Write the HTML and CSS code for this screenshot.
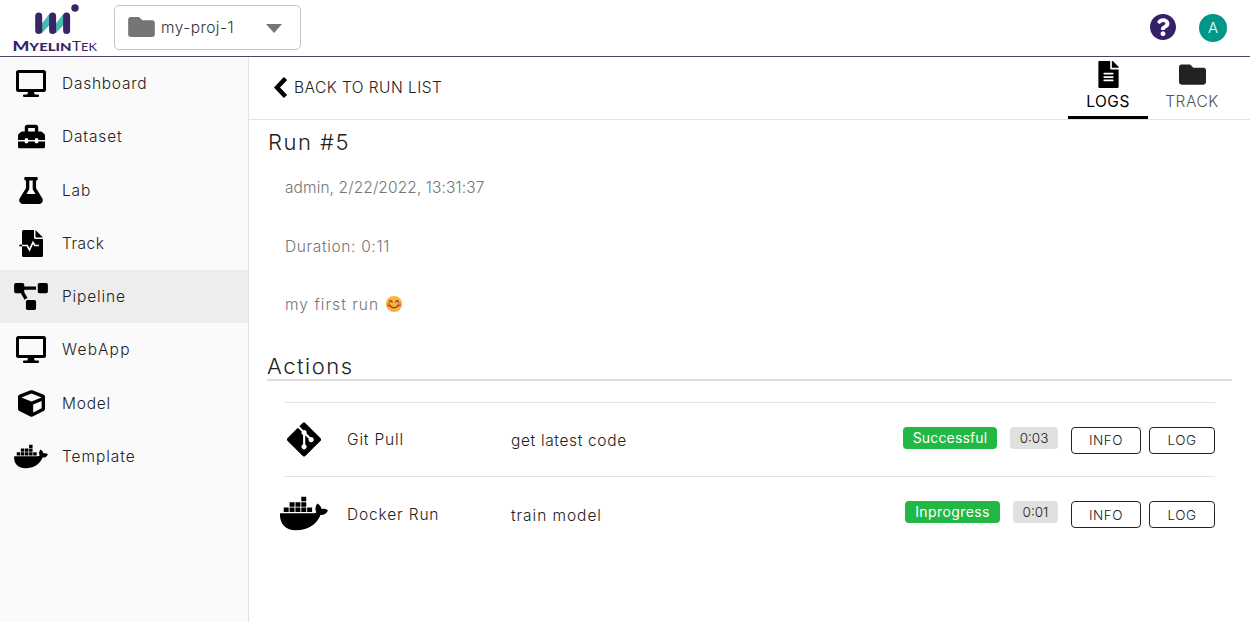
FILE: index.html
```html
<!DOCTYPE html>
<html lang="en">
<head>
<meta charset="utf-8">
<title>MyelinTek – Run #5</title>
<link rel="stylesheet" href="styles.css">
</head>
<body>
<svg class="defs" aria-hidden="true">
  <symbol id="desktop" viewBox="0 0 30 27"><path fill-rule="evenodd" d="M2.5 0h25A2.5 2.5 0 0 1 30 2.500V19.500A2.500 2.500 0 0 1 27.500 22H18l.7 2.500h3.300a1 1 0 0 1 1 1v.5a1 1 0 0 1-1 1H8a1 1 0 0 1-1-1v-.5a1 1 0 0 1 1-1h3.300L12 22H2.500A2.500 2.500 0 0 1 0 19.500V2.500A2.500 2.500 0 0 1 2.500 0zM3 3v16h24V3z"/></symbol>
  <symbol id="toolbox" viewBox="0 0 512 512"><path d="M502.63 214.63l-45.25-45.25c-6-6-14.14-9.38-22.63-9.38H384V80c0-26.51-21.490-48-48-48H176c-26.510 0-48 21.490-48 48v80H77.250c-8.490 0-16.620 3.370-22.630 9.380L9.370 214.630c-6 6-9.370 14.140-9.370 22.630V320h128v-16c0-8.840 7.160-16 16-16h32c8.840 0 16 7.160 16 16v16h128v-16c0-8.840 7.160-16 16-16h32c8.840 0 16 7.160 16 16v16h128v-82.750c0-8.480-3.370-16.620-9.370-22.620zM320 160H192V96h128v64zm64 208c0 8.840-7.160 16-16 16h-32c-8.840 0-16-7.160-16-16v-16H192v16c0 8.840-7.160 16-16 16h-32c-8.840 0-16-7.160-16-16v-16H0v96c0 17.670 14.330 32 32 32h448c17.670 0 32-14.330 32-32v-96H384v16z"/></symbol>
  <symbol id="flask" viewBox="0 0 448 512"><path d="M437.200 403.500L320 215V64h8c13.300 0 24-10.700 24-24V24c0-13.300-10.700-24-24-24H120c-13.300 0-24 10.700-24 24v16c0 13.300 10.700 24 24 24h8v151L10.800 403.500C-18.500 450.600 15.300 512 70.900 512h306.200c55.700 0 89.400-61.500 60.100-108.500zM137.900 320l48.200-77.600c3.700-5.200 5.800-11.600 5.800-18.400V64h64v160c0 6.900 2.200 13.200 5.800 18.400l48.200 77.600h-172z"/></symbol>
  <symbol id="wave-file" viewBox="0 0 24 27"><path d="M4.500 0H15v7.500a1.500 1.500 0 0 0 1.500 1.500H24v16.500a1.500 1.500 0 0 1-1.500 1.500h-18A1.500 1.500 0 0 1 3 25.500V1.500A1.500 1.500 0 0 1 4.500 0zM16.500 0l7.500 7.500h-7.500z"/><path d="M3 15.500h5.200l2.300 4.300L14 12.500l2 3h4" fill="none" stroke="#fafafa" stroke-width="1.700"/><path d="M.3 15.500H3" stroke="#000" stroke-width="1.700"/></symbol>
  <symbol id="diagram" viewBox="0 0 640 512"><path d="M384 320H256c-17.670 0-32 14.330-32 32v128c0 17.670 14.330 32 32 32h128c17.670 0 32-14.330 32-32V352c0-17.670-14.330-32-32-32zM192 32c0-17.670-14.330-32-32-32H32C14.330 0 0 14.330 0 32v128c0 17.670 14.330 32 32 32h95.720l73.160 128.040C211.980 300.980 232.400 288 256 288h.28L192 175.510V128h224V64H192V32zM608 0H480c-17.670 0-32 14.330-32 32v128c0 17.670 14.330 32 32 32h128c17.670 0 32-14.330 32-32V32c0-17.670-14.330-32-32-32z"/></symbol>
  <symbol id="cube" viewBox="0 0 512 512"><path d="M239.100 6.300l-208 78c-18.700 7-31.100 25-31.100 45v225.100c0 18.200 10.300 34.800 26.500 42.900l208 104c13.500 6.800 29.400 6.800 42.900 0l208-104c16.300-8.100 26.500-24.800 26.500-42.900V129.300c0-20-12.400-37.900-31.100-44.900l-208-78C262 2.200 250 2.200 239.100 6.300zM256 68.400l192 72v1.100l-192 78-192-78v-1.100l192-72zm32 356V275.500l160-65v133.900l-160 80z"/></symbol>
  <symbol id="docker" viewBox="0 0 640 512"><path d="M349.900 236.300h-66.100v-59.400h66.100v59.400zm0-204.300h-66.100v60.700h66.100V32zm78.200 144.800H362v59.400h66.100v-59.400zm-156.300-72.100h-66.100v60.100h66.100v-60.100zm78.100 0h-66.100v60.100h66.100v-60.100zm276.800 100c-14.400-9.700-47.600-13.200-73.100-8.400-3.300-24-16.700-44.900-41.100-63.700l-14-9.300-9.300 14c-18.400 27.800-23.400 73.600-3.700 103.800-8.700 4.700-25.800 11.100-48.400 10.700H2.400c-8.700 50.800 5.800 116.800 44 162.100 37.100 43.900 92.700 66.200 165.400 66.200 157.400 0 273.900-72.500 328.400-204.200 21.400.4 67.600.1 91.300-45.200 1.500-2.500 6.600-13.200 8.500-17.100l-13.300-8.900zm-511.100-27.900h-66v59.400h66.100v-59.400zm78.100 0h-66.100v59.400h66.100v-59.400zm78.100 0h-66.100v59.400h66.100v-59.400zm-78.100-72.100h-66.100v60.100h66.100v-60.100z"/></symbol>
  <symbol id="git" viewBox="0 0 448 512"><path d="M439.550 236.050L244 40.450a28.870 28.870 0 0 0-40.810 0l-40.660 40.630 51.520 51.520c27.060-9.140 52.680 16.770 43.390 43.680l49.660 49.660c34.230-11.800 61.180 31 35.470 56.690-26.490 26.490-70.210-2.870-56-37.340L240.220 199v121.850c25.300 12.540 22.260 41.850 9.080 55a34.340 34.340 0 0 1-48.550 0c-17.570-17.600-11.070-46.910 11.250-56v-123c-20.800-8.510-24.600-30.740-18.640-45L142.570 101 8.450 235.140a28.860 28.860 0 0 0 0 40.810l195.610 195.600a28.860 28.860 0 0 0 40.800 0l194.690-194.690a28.860 28.860 0 0 0 0-40.810z"/></symbol>
  <symbol id="file" viewBox="0 0 384 512"><path d="M224 136V0H24C10.700 0 0 10.700 0 24v464c0 13.300 10.700 24 24 24h336c13.300 0 24-10.700 24-24V160H248c-13.200 0-24-10.800-24-24zm64 236c0 6.600-5.400 12-12 12H108c-6.600 0-12-5.400-12-12v-8c0-6.600 5.400-12 12-12h168c6.600 0 12 5.400 12 12v8zm0-64c0 6.600-5.400 12-12 12H108c-6.600 0-12-5.400-12-12v-8c0-6.600 5.400-12 12-12h168c6.600 0 12 5.400 12 12v8zm0-72v8c0 6.600-5.400 12-12 12H108c-6.600 0-12-5.400-12-12v-8c0-6.600 5.400-12 12-12h168c6.600 0 12 5.400 12 12zm96-114.100v6.100H256V0h6.100c6.400 0 12.500 2.500 17 7l97.900 98c4.500 4.500 7 10.600 7 16.900z"/></symbol>
  <symbol id="folder" viewBox="0 0 512 384"><path d="M464 64H272L217 9C212 3 205 0 196 0H48C21 0 0 21 0 48v288c0 27 21 48 48 48h416c27 0 48-21 48-48V112c0-27-21-48-48-48z"/></symbol>
  <symbol id="question" viewBox="8 8 496 496"><path d="M504 256c0 136.997-111.043 248-248 248S8 392.997 8 256C8 119.083 119.043 8 256 8s248 111.083 248 248zM262.655 90c-54.497 0-89.255 22.957-116.549 63.758-3.536 5.286-2.353 12.415 2.715 16.258l34.699 26.310c5.205 3.947 12.621 3.008 16.665-2.122 17.864-22.658 30.113-35.797 57.303-35.797 20.429 0 45.698 13.148 45.698 32.958 0 14.976-12.363 22.667-32.534 33.976C247.128 238.528 216 254.941 216 296v4c0 6.627 5.373 12 12 12h56c6.627 0 12-5.373 12-12v-1.333c0-28.462 83.186-29.647 83.186-106.667 0-58.002-60.165-102-116.531-102zM256 338c-25.365 0-46 20.635-46 46 0 25.364 20.635 46 46 46s46-20.636 46-46c0-25.364-20.635-46-46-46z"/></symbol>
</svg>

<header class="topbar">
  <svg class="logo" viewBox="0 0 90 56" width="90" height="56">
    <path class="logo-teal" d="M30 26l8.500-11q2-2.500 4-2.500V22L32 33h-3zM44 26l8.500-11q2-2.500 4-2.500V22L46 33h-3z"/>
    <path class="logo-bar" d="M28.700 16v14.500M42.600 16v14.500M56.600 16v14.500"/>
    <circle class="logo-dot" cx="65" cy="8" r="3.700"/>
    <text class="logo-text" x="2.500" y="50.500" textLength="59" lengthAdjust="spacingAndGlyphs"><tspan class="logo-cap">M</tspan>YELIN</text>
    <text class="logo-text thin" x="62" y="50.500" textLength="25" lengthAdjust="spacingAndGlyphs"><tspan class="logo-cap">T</tspan>EK</text>
  </svg>
  <div class="project">
    <svg class="project-icon"><use href="#folder"/></svg>
    <span class="project-name">my-proj-1</span>
    <span class="caret"></span>
  </div>
  <svg class="help"><use href="#question"/></svg>
  <span class="avatar">A</span>
</header>

<div class="body">
  <nav class="sidebar">
    <a class="item"><span class="slot"><svg width="30" height="27"><use href="#desktop"/></svg></span><span class="t-dashboard">Dashboard</span></a>
    <a class="item"><span class="slot"><svg width="27" height="27"><use href="#toolbox"/></svg></span><span class="t-dataset">Dataset</span></a>
    <a class="item"><span class="slot"><svg width="24" height="27"><use href="#flask"/></svg></span><span class="t-lab">Lab</span></a>
    <a class="item"><span class="slot"><svg width="24" height="27"><use href="#wave-file"/></svg></span><span class="t-track">Track</span></a>
    <a class="item active"><span class="slot"><svg width="34" height="27"><use href="#diagram"/></svg></span><span class="t-pipeline">Pipeline</span></a>
    <a class="item"><span class="slot"><svg width="30" height="27"><use href="#desktop"/></svg></span><span class="t-webapp">WebApp</span></a>
    <a class="item"><span class="slot"><svg width="27" height="27"><use href="#cube"/></svg></span><span class="t-model">Model</span></a>
    <a class="item"><span class="slot"><svg width="34" height="27"><use href="#docker"/></svg></span><span class="t-template">Template</span></a>
  </nav>
  <main class="main">
    <div class="toolbar">
      <a class="back"><svg class="chevron" viewBox="0 0 14 23"><path d="M12 2.500L3.500 11.500 12 20.500"/></svg><span class="back-text">BACK TO RUN LIST</span></a>
      <div class="tabs">
        <a class="tab selected"><svg width="21" height="27"><use href="#file"/></svg><span>LOGS</span></a>
        <a class="tab"><svg class="dim" width="27" height="27"><use href="#folder"/></svg><span>TRACK</span></a>
      </div>
    </div>
    <section class="content">
      <h1 class="title">Run #5</h1>
      <p class="meta t-admin">admin, 2/22/2022, 13:31:37</p>
      <p class="meta t-duration">Duration: 0:11</p>
      <p class="meta"><span class="t-first">my first run</span>
        <svg class="smile" viewBox="0 0 16 16"><circle cx="8" cy="8" r="8" fill="#fbb13b"/><circle cx="2.700" cy="9" r="1.900" fill="#f4703c"/><circle cx="13.300" cy="9" r="1.900" fill="#f4703c"/><path d="M3.500 6q1.200-2.800 2.600 0M9.900 6q1.300-2.800 2.600 0M3.700 9.300q4.300 5 8.600 0" fill="none" stroke="#70452a" stroke-width="1.300" stroke-linecap="round"/></svg></p>
      <h2 class="title actions-title">Actions</h2>
      <div class="actions">
        <div class="row">
          <span class="row-icon"><svg width="34" height="39"><use href="#git"/></svg></span>
          <span class="row-name"><span class="t-git">Git Pull</span></span>
          <span class="row-desc t-get">get latest code</span>
          <span class="badge t-success">Successful</span>
          <span class="time">0:03</span>
          <button class="btn info">INFO</button>
          <button class="btn log">LOG</button>
        </div>
        <div class="row">
          <span class="row-icon"><svg width="48" height="39"><use href="#docker"/></svg></span>
          <span class="row-name"><span class="t-docker">Docker Run</span></span>
          <span class="row-desc t-train">train model</span>
          <span class="badge t-progress">Inprogress</span>
          <span class="time short">0:01</span>
          <button class="btn info">INFO</button>
          <button class="btn log">LOG</button>
        </div>
      </div>
    </section>
  </main>
</div>
</body>
</html>
```
FILE: styles.css
```css
* { box-sizing: border-box; }
body {
  margin: 0;
  height: 622px;
  display: flex;
  flex-direction: column;
  overflow: hidden;
  background: #fff;
  color: #222;
  font: 300 15.5px/20px Inter, "Open Sans", sans-serif;
}
svg { flex: none; }
.defs { display: none; }

.topbar {
  height: 57px;
  flex: none;
  display: flex;
  align-items: center;
  padding: 0 23px 0 10px;
  border-bottom: 1px solid #4d426b;
}
.logo { margin-right: 14px; }
.logo-teal { fill: #48b9b1; }
.logo-bar { fill: none; stroke: #3a2468; stroke-width: 7; stroke-linecap: round; }
.logo-dot { fill: #3a2468; }
.logo-text { font: 900 10.500px Lato, sans-serif; fill: #3a2468; }
.logo-text.thin { font-weight: 400; }
.logo-cap { font-size: 12.500px; }
.project {
  width: 187px;
  height: 45px;
  margin-bottom: 2px;
  display: flex;
  align-items: center;
  padding: 0 18px 0 13px;
  border: 1px solid #c4c4c4;
  border-radius: 5px;
}
.project-icon { width: 27px; height: 20px; fill: #757575; }
.project-name { margin: 2px 0 0 6px; letter-spacing: .45px; color: #333; }
.caret {
  margin-left: auto;
  margin-top: 2px;
  border: 8px solid transparent;
  border-top: 9px solid #757575;
  border-bottom: 0;
}
.help { width: 26px; height: 26px; margin-left: auto; margin-bottom: 2px; fill: #35206b; }
.avatar {
  width: 28px;
  height: 28px;
  margin-left: 23px;
  border-radius: 50%;
  background: #009688;
  color: #fff;
  font-size: 15px;
  line-height: 28px;
  text-align: center;
}

.body { flex: 1; display: flex; min-height: 0; }
.sidebar { width: 249px; flex: none; background: #fafafa; border-right: 1px solid #e2e2e2; }
.item { height: 53.25px; display: flex; align-items: center; color: #222; }
.item > span:last-child { margin-top: 1px; }
.item.active { background: #ededed; }
.slot { width: 62px; display: flex; justify-content: center; }
.t-dashboard, .t-model { letter-spacing: .75px; }
.t-dataset, .t-lab, .t-pipeline, .t-git { letter-spacing: .85px; }
.t-track { letter-spacing: .5px; }
.t-webapp { letter-spacing: 1.3px; }
.t-template { letter-spacing: .95px; }
.t-admin { letter-spacing: .1px; }
.t-duration { letter-spacing: .65px; }
.t-first { letter-spacing: 1.05px; }
.t-docker { letter-spacing: .85px; }
.t-get { letter-spacing: .65px; }
.t-train { letter-spacing: .95px; }

.main { flex: 1; min-width: 0; }
.toolbar {
  height: 63px;
  display: flex;
  justify-content: space-between;
  border-bottom: 1px solid #e2e2e2;
  padding: 0 14px 0 24px;
}
.back { display: flex; align-items: center; color: #222; padding-bottom: 1px; }
.chevron { width: 15px; height: 23px; fill: none; stroke: #000; stroke-width: 4.500; stroke-linecap: butt; }
.back-text { margin: 1px 0 0 6px; letter-spacing: .45px; }
.tabs { display: flex; }
.tab {
  width: 80px;
  display: flex;
  flex-direction: column;
  align-items: center;
  gap: 4px;
  padding-top: 4px;
  border-bottom: 3px solid transparent;
  color: #555;
  letter-spacing: .5px;
}
.tab + .tab { width: 88px; }
.tab.selected { border-color: #000; color: #000; font-weight: 400; }
.dim { fill: #222; }

.content { padding: 7px 18px 0 19px; }
.title { margin: 0; font-size: 22px; line-height: 30px; font-weight: 300; letter-spacing: 1.5px; }
.meta { height: 20px; margin: 0 0 38.500px 17px; color: #757575; display: flex; align-items: center; }
.title + .meta { margin-top: 21px; }
.smile { width: 16px; height: 16px; margin: 0 0 2px 7px; }
.actions-title { height: 30px; border-bottom: 2px solid #ddd; line-height: 31px; margin: -3px 0 0 -1px; }
.actions { margin: 21px 17px 0; }
.row { height: 74.500px; display: flex; align-items: center; border-top: 1px solid #e2e2e2; }
.row-icon { width: 38px; display: flex; justify-content: center; }
.row-name { width: 164px; margin: 2px 0 0 24px; }
.row-desc { margin-top: 4px; }
.badge {
  width: 94px;
  height: 22px;
  margin: 0 13px 3px auto;
  border-radius: 4px;
  background: #22b845;
  color: #fff;
  font-size: 14px;
  font-weight: 400;
  line-height: 22px;
  text-align: center;
}
.t-success { letter-spacing: .15px; }
.t-progress { width: 95px; letter-spacing: .4px; }
.time {
  width: 48px;
  height: 22px;
  margin: 0 13px 3px 0;
  border-radius: 4px;
  background: #e0e0e0;
  font-size: 13.500px;
  line-height: 22px;
  text-align: center;
}
.time.short { width: 45px; }
.btn {
  height: 27px;
  margin: 2px 0 0;
  padding: 0;
  border: 1px solid #222;
  border-radius: 4px;
  background: #fff;
  color: #222;
  font: 300 13.500px Inter, "Open Sans", sans-serif;
  letter-spacing: .5px;
}
.info { width: 70px; }
.log { width: 66px; margin-left: 8px; }
```
